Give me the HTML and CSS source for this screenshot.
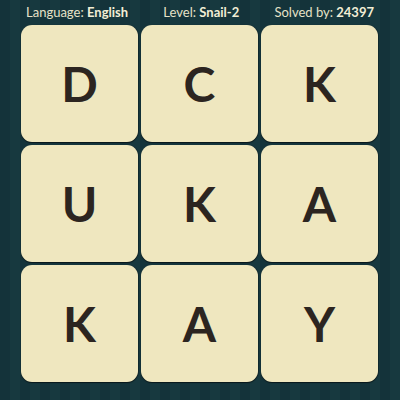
FILE: index.html
```html
<!DOCTYPE html>
<html>
<head>
<meta charset="utf-8">
<link rel="stylesheet" href="styles.css">
</head>
<body>
<div class="page">
  <div class="header">
    <span class="item">Language: <b>English</b></span>
    <span class="item">Level: <b>Snail-2</b></span>
    <span class="item">Solved by: <b>24397</b></span>
  </div>
  <div class="grid">
    <div class="tile">D</div>
    <div class="tile">C</div>
    <div class="tile">K</div>
    <div class="tile">U</div>
    <div class="tile">K</div>
    <div class="tile">A</div>
    <div class="tile">K</div>
    <div class="tile">A</div>
    <div class="tile">Y</div>
  </div>
</div>
</body>
</html>
```
FILE: styles.css
```css
html, body {
  margin: 0;
  padding: 0;
}
body {
  width: 400px;
  height: 400px;
  overflow: hidden;
  background-color: #15353b;
  background-image: repeating-linear-gradient(90deg, #14333a 0px, #14333a 10px, #17393f 10px, #17393f 20px);
  font-family: Lato, "Liberation Sans", sans-serif;
}
.page {
  display: flex;
  flex-direction: column;
}
.header {
  height: 25px;
  display: flex;
  justify-content: space-between;
  align-items: center;
  padding: 0 26px 0 26px;
  color: #e6e2c8;
  font-size: 13px;
  line-height: 1;
  box-sizing: border-box;
}
.header b {
  font-weight: 700;
  color: #f2eed6;
}
.grid {
  display: grid;
  grid-template-columns: repeat(3, 117px);
  grid-template-rows: repeat(3, 117px);
  gap: 3px;
  padding-left: 21px;
}
.tile {
  background: #efe7bf;
  border-radius: 11px;
  box-shadow: 0 1px 1px rgba(0, 0, 0, 0.55), 1px 0 1px rgba(0, 0, 0, 0.25);
  display: flex;
  align-items: center;
  justify-content: center;
  color: #2c2520;
  font-size: 48px;
  font-weight: 700;
  line-height: 1;
  padding-top: 1px;
  box-sizing: border-box;
}
```
